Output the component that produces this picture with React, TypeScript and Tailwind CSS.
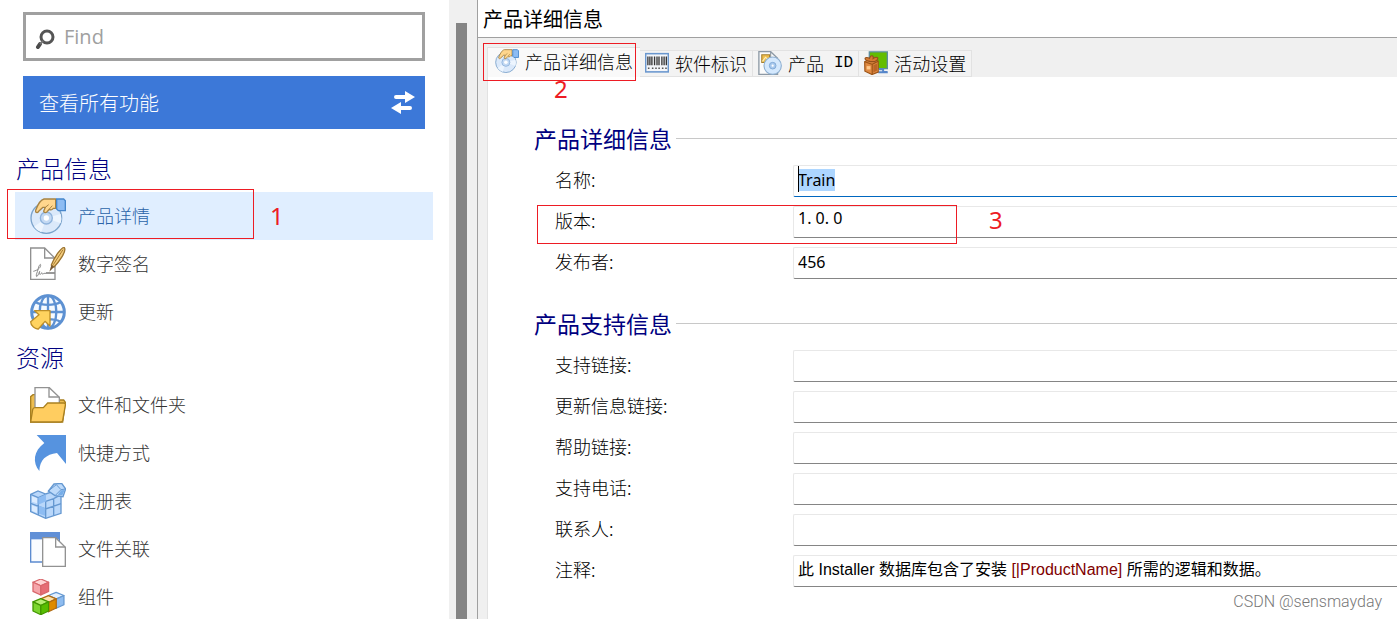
import { useEffect, useRef, type ReactNode } from "react";

function Icon({ children, size = "size-9" }: { children: ReactNode; size?: string }) {
  return (
    <svg viewBox="0 0 108 108" className={`${size} shrink-0`} fill="none" aria-hidden="true">
      {children}
    </svg>
  );
}

function DiscHand() {
  return (
    <>
      <circle cx="49" cy="60" r="46" fill="#dbe9fa" stroke="#7ba3cb" strokeWidth="4" />
      <path d="M49 60 12 86A46 46 0 0 0 34 103ZM49 60 92 48A46 46 0 0 1 92 76Z" fill="#edf5fe" />
      <circle cx="49" cy="60" r="18" fill="#c3d9f3" stroke="#8fb3dc" strokeWidth="4" />
      <circle cx="49" cy="60" r="8" fill="#fff" />
      <path
        d="M77 3H42C33 5 24 18 17 37c-2 7 5 9 9 3l13-12h7l-5 12c2 6 8 5 12-1l5-5c5 3 9 1 12-3h7Z"
        fill="#ffd68d"
        stroke="#a68343"
        strokeWidth="4"
        strokeLinejoin="round"
      />
      <path d="m46 28 10-8M58 33l9-10" stroke="#a68343" strokeWidth="3" />
      <path d="M80 3h21l5 5v30H85l-5-5Z" fill="#8dbcf3" stroke="#4586cb" strokeWidth="4" />
    </>
  );
}

function Signature() {
  return (
    <>
      <path d="M2 6h42l31 31v63H2Z" fill="#fff" stroke="#909090" strokeWidth="4" />
      <path d="M44 6v30h31" stroke="#909090" strokeWidth="4" />
      <path
        d="M10 76c12-3 22-10 22-18s-6 2-8 12-6 14-5 20 6-4 10-14c-2 12 2 12 6 4 1 6 4 4 7 2h6"
        stroke="#8a8a8a"
        strokeWidth="3"
      />
      <path d="M48 81h26" stroke="#666" strokeWidth="4" />
      <path d="M103 5c-8-4-30 29-39 52l8 6c14-14 39-47 31-58Z" fill="#f4cd7d" stroke="#9a7330" strokeWidth="4" />
      <path d="m64 57-6 20 14-14Z" fill="#775832" />
      <path d="M99 11 70 56" stroke="#a87b30" strokeWidth="3" />
    </>
  );
}

function Globe() {
  return (
    <>
      <circle cx="54" cy="54" r="49" fill="#f5faff" stroke="#5d91d2" strokeWidth="9" />
      <ellipse cx="54" cy="54" rx="25" ry="49" stroke="#5d91d2" strokeWidth="7" />
      <path d="M54 5v98M5 54h98M17 25c19 10 55 10 74 0M17 83c19-10 55-10 74 0" stroke="#5d91d2" strokeWidth="7" />
      <path
        d="M14 50h46v46L45 82 25 105c-9 1-23-9-23-22l25-21Z"
        fill="#ffd35f"
        stroke="#bd8e28"
        strokeWidth="4"
        strokeLinejoin="round"
      />
    </>
  );
}

function Folder() {
  return (
    <>
      <path d="M2 105V29l7-6h12v30h65V39h15l5 7-8 59Z" fill="#edbd50" stroke="#a98020" strokeWidth="4" />
      <path d="M15 2h43l30 29v38H15Z" fill="#fff" stroke="#929292" strokeWidth="4" />
      <path d="M57 2v28h31" stroke="#929292" strokeWidth="4" />
      <path
        d="M8 68q1-6 7-6h25l13-14h48q6 0 5 7l-8 46q-1 4-6 4H2Z"
        fill="#ffcd60"
        stroke="#a98020"
        strokeWidth="4"
      />
    </>
  );
}

function Shortcut() {
  return (
    <path
      d="M20 0h88v87L81 54C48 58 29 75 28 108 7 83 10 48 43 24Z"
      fill="#5693df"
    />
  );
}

// one isometric cube, 36 wide and 40 tall, placed by its top left corner
function Cube({ x, y, top, left, right, line }: { x: number; y: number; top: string; left: string; right: string; line: string }) {
  return (
    <g transform={`translate(${x} ${y}) scale(1.3 1.2)`} stroke={line} strokeWidth="3" strokeLinejoin="round">
      <path d="m0 8 18-8 18 8-18 9Z" fill={top} />
      <path d="m0 8 18 9v23L0 31Z" fill={left} />
      <path d="m36 8-18 9v23l18-9Z" fill={right} />
    </g>
  );
}

function Registry() {
  return (
    <>
      <path d="m2 34 22-10 23 9 24-8 22 10v56l-46 15-45-20Z" fill="#b9d7fa" stroke="#6598d1" strokeWidth="4" />
      <path d="m2 34 23 10v52M2 61l45 17 46-16M47 55v51M71 48v50M25 44l22-10M47 55l24-8 22-12" stroke="#6598d1" strokeWidth="4" />
      <path d="m25 44 23-10v21l-23 10ZM27 68l18 6v24l-18-6Z" fill="#8dbcf2" />
      <path d="m6 40 15 6v15L6 56ZM6 67l15 6v17L6 83Z" fill="#dcecff" />
      <path d="m72 3 23-2 12 17-8 23-24-3-20-14Z" fill="#bddafa" stroke="#6598d1" strokeWidth="4" />
      <path d="m79 5 14 15 14-2M93 20 75 38M79 5 55 24" stroke="#6598d1" strokeWidth="3" />
      <path d="m94 22 10-1-7 16-14-2Z" fill="#77aee9" />
    </>
  );
}

function Association() {
  return (
    <>
      <path d="M2 6h86v87H2Z" fill="#fafcff" stroke="#5c8bd0" strokeWidth="4" />
      <path d="M0 3h90v22H0Z" fill="#6190d7" />
      <path d="M38 20h39l29 29v57H38Z" fill="#fff" stroke="#929292" strokeWidth="4" />
      <path d="M77 20v28h29" stroke="#929292" strokeWidth="4" />
    </>
  );
}

function Components() {
  return (
    <>
      <Cube x={9} y={0} top="#ffd5d5" left="#f5a5aa" right="#e66d75" line="#d8666b" />
      <Cube x={55} y={40} top="#e2f0ff" left="#c3dcfa" right="#8ebcf0" line="#6699d1" />
      <Cube x={32} y={50} top="#ffe3ab" left="#f3af35" right="#df8b00" line="#b16c15" />
      <Cube x={9} y={59} top="#b5ef70" left="#7cd52f" right="#57bd00" line="#429600" />
    </>
  );
}

function Barcode() {
  return (
    <>
      <rect x="3" y="12" width="102" height="82" fill="#f4f6fa" stroke="#6a97ce" strokeWidth="7" />
      <path d="M13 25v39M22 25v39M31 25v39M43 25v39M54 25v39M63 25v39M76 25v39M86 25v39M96 25v39" stroke="#353535" strokeWidth="6" />
      <path d="M13 78h7M31 78h7M46 78h7M60 78h7M76 78h7M91 78h7" stroke="#555" strokeWidth="7" />
    </>
  );
}

function ProductDisc() {
  return (
    <>
      <path d="M4 3h53l31 30v72H4Z" fill="#fbfbfb" stroke="#8d99a5" strokeWidth="6" />
      <path d="M57 3v30h31" stroke="#8d99a5" strokeWidth="5" />
      <path d="M17 17h35v35H17Z" fill="#eebd4b" stroke="#a68131" strokeWidth="5" />
      <path d="m20 47 14-19 17 15" stroke="#fff0bf" strokeWidth="5" />
      <circle cx="66" cy="66" r="39" fill="#d4e8fd" stroke="#8caed0" strokeWidth="5" />
      <circle cx="66" cy="66" r="15" fill="#a9c9ee" stroke="#7da7d5" strokeWidth="4" />
      <circle cx="66" cy="66" r="5" fill="#fff" />
    </>
  );
}

function Activity() {
  return (
    <>
      <path d="M24 4h81v75H24Z" fill="#63bd00" stroke="#5c8e9e" strokeWidth="6" />
      <path d="M67 82h19v12h18M64 96h43" stroke="#5686c9" strokeWidth="9" />
      <path d="m3 48 29-16 32 14v49l-28 11L4 91Z" fill="#e08a42" stroke="#9b5316" strokeWidth="5" />
      <path d="m3 48 34 12 27-14M37 60v45" stroke="#9b5316" strokeWidth="5" />
      <path d="M30 48c-38-8-28-27-5-15 4-17 20-14 16 1 20-12 33 0 6 14Z" fill="#d77b32" stroke="#92501c" strokeWidth="5" />
      <path d="M12 68h17v15H12Z" fill="#ffc88b" />
      <path d="m42 64 17-8v32l-17 9Z" fill="#ba6526" />
    </>
  );
}

const navGroups = [
  {
    title: "产品信息",
    items: [
      { label: "产品详情", icon: <DiscHand />, active: true },
      { label: "数字签名", icon: <Signature /> },
      { label: "更新", icon: <Globe /> },
    ],
  },
  {
    title: "资源",
    items: [
      { label: "文件和文件夹", icon: <Folder /> },
      { label: "快捷方式", icon: <Shortcut /> },
      { label: "注册表", icon: <Registry /> },
      { label: "文件关联", icon: <Association /> },
      { label: "组件", icon: <Components /> },
    ],
  },
];

const tabs = [
  { label: "软件标识", icon: <Barcode /> },
  { label: "产品", suffix: "ID", icon: <ProductDisc /> },
  { label: "活动设置", icon: <Activity /> },
];

const supportFields = [
  { id: "support-link", label: "支持链接" },
  { id: "update-link", label: "更新信息链接" },
  { id: "help-link", label: "帮助链接" },
  { id: "support-phone", label: "支持电话" },
  { id: "contact", label: "联系人" },
];

const fieldClass =
  "block h-8 w-full rounded-l-xs border-t border-b border-l border-t-[#e8e8e8] border-l-[#e8e8e8] border-b-[#858585] bg-white pl-1 text-base text-black outline-none";

function Mark({ children, className }: { children: ReactNode; className: string }) {
  return (
    <span
      className={`pointer-events-none absolute font-['Noto_Sans',sans-serif] text-2xl leading-5 font-normal text-[#ed1c24] ${className}`}
    >
      {children}
    </span>
  );
}

function Sidebar() {
  return (
    <aside className="w-[449px] shrink-0 overflow-hidden bg-white">
      <div className="mr-6 ml-[23px] pt-3">
        <label className="flex h-[49px] items-center gap-2 border-3 border-[#a0a0a0] pl-[6px]">
          <svg viewBox="0 0 24 24" className="size-6 shrink-0" fill="none" aria-hidden="true">
            <circle cx="15" cy="12" r="6" stroke="#555" strokeWidth="3" />
            <path d="m8 19-2 3" stroke="#4b4b4b" strokeWidth="4" strokeLinecap="round" />
            <path d="m11 16-3 3" stroke="#777" strokeWidth="2" />
          </svg>
          <input
            type="search"
            aria-label="Find"
            placeholder="Find"
            className="min-w-0 flex-1 font-['Open_Sans',sans-serif] text-xl outline-none placeholder:text-[#a0a0a0]"
          />
        </label>
        <button className="mt-[15px] flex h-[53px] w-full items-center justify-between bg-[#3c78d8] pr-2 pl-4 text-xl font-light text-white">
          查看所有功能
          <svg viewBox="0 0 28 28" className="size-7" fill="none" aria-hidden="true">
            <path d="M7 8h12M9 19h12" stroke="white" strokeWidth="4" strokeLinecap="round" />
            <path d="m16 2 10 6-10 6ZM12 13 2 19l10 6Z" fill="white" />
          </svg>
        </button>
      </div>

      <nav className="mt-[18px]">
        {navGroups.map((group) => (
          <section key={group.title}>
            <h2 className="flex h-[45px] items-center pb-1 pl-4 text-2xl font-light text-[#000080]">{group.title}</h2>
            {group.items.map((item) => (
              <div key={item.label} className="relative">
                <div className="mr-4 ml-[15px]">
                  <button
                    className={`flex h-12 w-full items-center gap-3 pl-[15px] text-lg font-light ${
                      item.active ? "bg-[#e0eeff] text-[#2b63a8]" : "text-[#333]"
                    }`}
                  >
                    <Icon>{item.icon}</Icon>
                    <span className="pb-[2px]">{item.label}</span>
                  </button>
                </div>
                {item.active && (
                  <>
                    <span className="pointer-events-none absolute -top-[3px] left-[7px] h-[50px] w-[247px] border border-[#ed1c24]" />
                    <Mark className="top-[14px] left-[270px]">1</Mark>
                  </>
                )}
              </div>
            ))}
          </section>
        ))}
      </nav>
    </aside>
  );
}

function Field({ label, id, children }: { label: string; id: string; children: ReactNode }) {
  return (
    <div className="flex items-center">
      <label
        id={`${id}-label`}
        htmlFor={id}
        className="w-[238px] shrink-0 pb-1 text-lg leading-7 font-light text-black"
      >
        {label}:
      </label>
      <div className="relative min-w-0 flex-1">{children}</div>
    </div>
  );
}

function Section({ title, children }: { title: string; children: ReactNode }) {
  return (
    <section className="pl-[46px]">
      <h2 className="flex h-[34px] items-center gap-1 text-[23px] text-[#000080] after:h-px after:flex-1 after:bg-[#c8c8c8]">
        {title}
      </h2>
      <div className="mt-[10px] flex flex-col gap-[9px] pl-[21px]">{children}</div>
    </section>
  );
}

export default function App() {
  const nameRef = useRef<HTMLInputElement>(null);

  useEffect(() => {
    nameRef.current?.focus();
    nameRef.current?.select();
  }, []);

  return (
    <div className="relative flex h-screen overflow-hidden bg-white font-['Noto_Sans_CJK_SC',sans-serif]">
      <Sidebar />
      <div className="w-7 shrink-0 bg-[#f0f0f0] pt-[23px] pl-[7px]">
        <div className="h-full w-[11px] bg-[#858585]" />
      </div>

      <main className="flex min-w-0 flex-1 flex-col border-l border-[#a0a0a0] bg-[#f0f0f0]">
        <h1 className="h-[38px] shrink-0 border-b border-[#a0a0a0] bg-white pl-[5px] text-xl leading-[38px] text-black">
          产品详细信息
        </h1>

        <div role="tablist" className="ml-[9px] flex h-[39px] shrink-0 items-end text-lg font-light text-black">
          <div className="relative">
            <button
              role="tab"
              aria-selected="true"
              className="flex h-[30px] w-[153px] items-center gap-[6px] border-t border-l border-[#e2e2e2] bg-[#f9f9f9] pb-1 pl-[7px] whitespace-nowrap"
            >
              <Icon size="size-6">
                <DiscHand />
              </Icon>
              产品详细信息
            </button>
            <span className="pointer-events-none absolute -top-1 -left-1 h-[38px] w-[153px] border border-[#ed1c24]" />
            <Mark className="top-8 left-[67px]">2</Mark>
          </div>
          {tabs.map((tab) => (
            <button
              key={tab.label}
              role="tab"
              aria-selected="false"
              className="flex h-[27px] items-center gap-[6px] border border-l-0 border-[#e2e2e2] bg-[#f3f3f3] px-[5px] pb-[2px] whitespace-nowrap"
            >
              <Icon size="size-6">{tab.icon}</Icon>
              {tab.label}
              {tab.suffix && <span className="pl-1 font-['Liberation_Mono',monospace] text-base">{tab.suffix}</span>}
            </button>
          ))}
        </div>

        <form className="ml-[9px] flex flex-1 flex-col gap-[27px] border-l border-[#e2e2e2] bg-white pt-11">
          <Section title="产品详细信息">
            <Field label="名称" id="product-name">
              <input
                ref={nameRef}
                id="product-name"
                defaultValue="Train"
                className={`${fieldClass} border-b-[#0067c0]! pb-[2px] font-['Noto_Sans',sans-serif] selection:bg-[#add6ff] selection:text-black`}
              />
              <span className="absolute top-px left-[5px] h-[26px] w-px bg-black" />
            </Field>
            <Field label="版本" id="product-version">
              <input
                id="product-version"
                defaultValue="1. 0. 0"
                className={`${fieldClass} pb-2 font-['Noto_Sans',sans-serif] leading-[22px]`}
              />
              <span className="pointer-events-none absolute -top-px -left-64 h-[39px] w-[420px] border border-[#ed1c24]" />
              <Mark className="top-1 left-[196px]">3</Mark>
            </Field>
            <Field label="发布者" id="publisher">
              <input id="publisher" defaultValue="456" className={`${fieldClass} pb-[2px] font-['Noto_Sans',sans-serif]`} />
            </Field>
          </Section>

          <Section title="产品支持信息">
            {supportFields.map((field) => (
              <Field key={field.id} label={field.label} id={field.id}>
                <input id={field.id} className={fieldClass} />
              </Field>
            ))}
            <Field label="注释" id="comments">
              {/* rich text, so that property references keep their own colour */}
              <div
                id="comments"
                role="textbox"
                aria-labelledby="comments-label"
                contentEditable
                suppressContentEditableWarning
                className={`${fieldClass} overflow-hidden font-['Liberation_Sans','Noto_Sans_CJK_SC',sans-serif] leading-7 whitespace-nowrap`}
              >
                此 Installer 数据库包含了安装 <span className="text-[#800000]">[|ProductName]</span> 所需的逻辑和数据。
              </div>
            </Field>
          </Section>
        </form>
      </main>

      <p className="absolute right-[15px] bottom-[5px] font-[Roboto,sans-serif] text-base font-light text-[#777]">
        CSDN @sensmayday
      </p>
    </div>
  );
}
